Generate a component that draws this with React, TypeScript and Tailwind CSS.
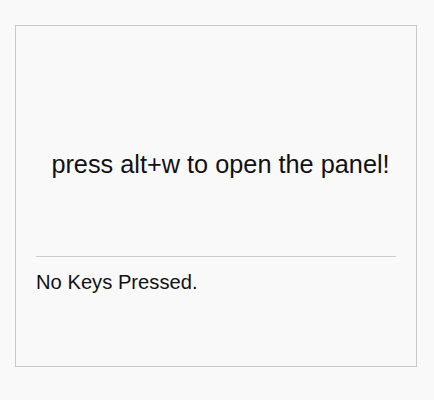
export default function App() {
  return (
    <div className="min-h-[400px] bg-[#faf9fa] pt-[25px] pl-[15px]" style={{ fontFamily: '"Liberation Sans", Arial, sans-serif' }}>
      <div className="w-[402px] h-[342px] border border-[#c8c8c8] bg-[#faf9fa] text-[#111]">
        <div className="h-[230px] pt-[124px] pl-[29px] pr-5 text-center">
          <h1 className="text-[25.3px] leading-[29px]">press alt+w to open the panel!</h1>
        </div>
        <div className="mx-5 border-t border-[#cccccc]" />
        <p className="px-5 pt-[14px] text-[20.2px] leading-[23px]">No Keys Pressed.</p>
      </div>
    </div>
  )
}
